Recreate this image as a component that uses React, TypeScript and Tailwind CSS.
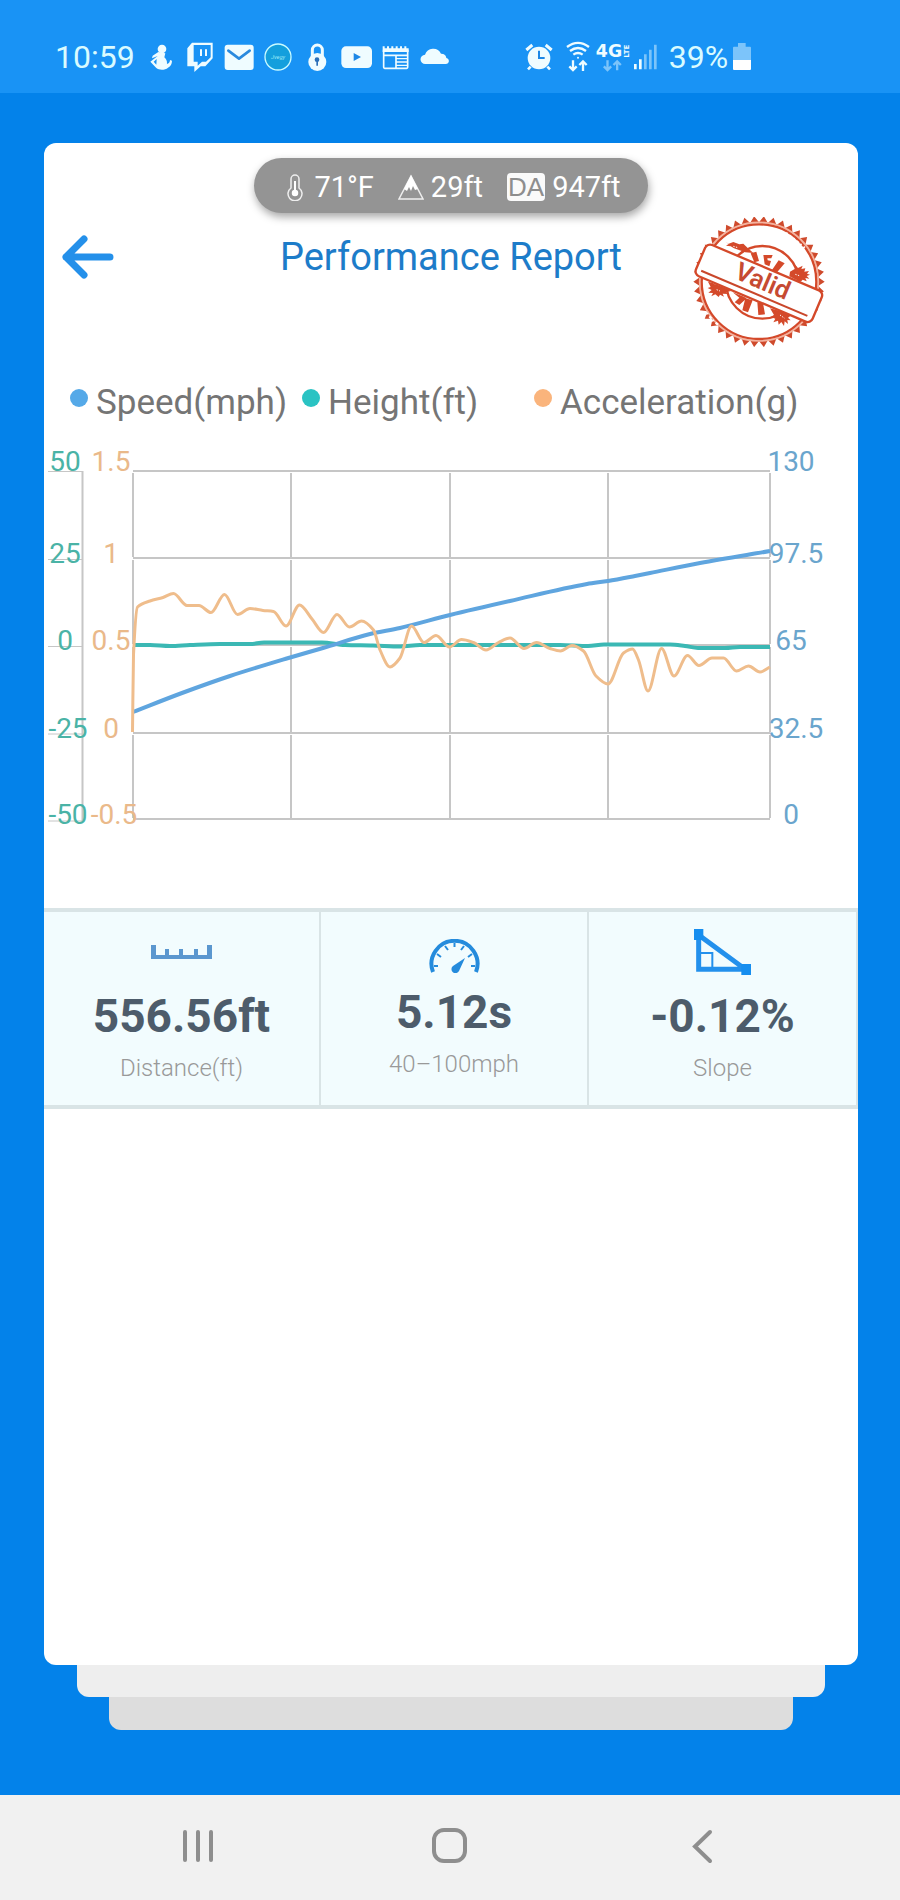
import React from 'react';

type Point = [number, number];

const LEGEND = [
  { label: 'Speed(mph)', dot: 'bg-[#55a9e8]' },
  { label: 'Height(ft)', dot: 'bg-[#2ac3c3]' },
  { label: 'Acceleration(g)', dot: 'bg-[#fab47c]' },
];

const GRID_X = [133, 291, 450, 608, 770];
const GRID_Y = [471, 558, 645, 733, 819];

const HEIGHT_LABELS = ['50', '25', '0', '-25', '-50'];
const ACCEL_LABELS = ['1.5', '1', '0.5', '0', '-0.5'];
const SPEED_LABELS = ['130', '97.5', '65', '32.5', '0'];
const LABEL_Y = [471, 563, 650, 738, 824];

const SPEED: Point[] = [
  [133, 712], [182, 693], [230, 676], [285, 659], [323, 648], [370, 634], [400, 628], [450, 615],
  [510, 601], [587, 584], [608, 581], [635, 576], [650, 573], [700, 563], [770, 551],
];

const HEIGHT: Point[] = [
  [133, 645], [150, 645], [170, 646], [190, 645], [220, 644], [250, 644], [264, 642.5], [322, 642.5],
  [345, 645], [373, 645.5], [400, 646.5], [420, 645], [480, 645], [560, 645], [588, 646], [604, 644.5],
  [670, 644.5], [685, 646], [698, 648], [725, 648], [740, 647], [770, 647],
];

const ACCEL: Point[] = [
  [132.5, 732], [133.5, 655], [137.5, 607], [150, 601], [163, 597.5], [173.5, 593.5], [187, 605.5],
  [199, 605.5], [211, 612.5], [224.5, 594.5], [237.5, 614.5], [250, 608.5], [263, 610.5], [273.5, 611.5],
  [286, 626], [299.5, 605], [312, 619], [323.5, 632.5], [337, 614.5], [349.5, 627], [361.5, 621],
  [373.5, 630], [380, 650], [390, 667], [400, 658], [411.5, 626], [424, 642.5], [436, 635.5],
  [449.5, 647], [461.5, 639.5], [473.5, 642.5], [486, 650], [498.5, 642.5], [510, 638], [524, 648.5],
  [536.5, 642.5], [550, 648.5], [560.5, 651], [572, 645.5], [583.5, 651], [596, 676], [608, 684],
  [623.5, 653], [632.5, 649], [638.5, 660], [648, 691], [661.5, 648.5], [674, 676], [687.5, 655.5],
  [699, 665.5], [712, 658], [723.5, 658], [736.5, 671], [748.5, 666], [760, 672], [770, 667],
];

// Monotone cubic: flat at every peak and dip, so the curve never overshoots.
const smooth = (pts: Point[]) => {
  const slope = (i: number) => (pts[i + 1][1] - pts[i][1]) / (pts[i + 1][0] - pts[i][0]);
  const tangents = pts.map((_, i) => {
    if (i === 0) return slope(0);
    if (i === pts.length - 1) return slope(i - 1);
    const a = slope(i - 1);
    const b = slope(i);
    return a * b <= 0 ? 0 : (2 * a * b) / (a + b);
  });
  let d = `M${pts[0][0]} ${pts[0][1]}`;
  for (let i = 0; i < pts.length - 1; i++) {
    const [x0, y0] = pts[i];
    const [x1, y1] = pts[i + 1];
    const h = (x1 - x0) / 3;
    d += `C${x0 + h} ${y0 + tangents[i] * h} ${x1 - h} ${y1 - tangents[i + 1] * h} ${x1} ${y1}`;
  }
  return d;
};

// Zigzag rim of the stamp.
const rim = (cx: number, cy: number, inner: number, outer: number, teeth: number) =>
  Array.from({ length: teeth * 2 }, (_, i) => {
    const r = i % 2 ? inner : outer;
    const a = (i * Math.PI) / teeth;
    return `${(cx + r * Math.cos(a)).toFixed(1)},${(cy + r * Math.sin(a)).toFixed(1)}`;
  }).join(' ');

const NoticeIcon: React.FC<{ children: React.ReactNode }> = ({ children }) => (
  <svg viewBox="0 0 117 96" className="h-8 w-[39px] shrink-0" fill="#effcff" aria-hidden="true">
    {children}
  </svg>
);

const StatusBar: React.FC = () => (
  <header className="flex h-[93px] items-center whitespace-nowrap bg-[#1993f5] pl-[55px] pt-5 text-[32px] leading-8 text-[#d9fbff]">
    <span>10:59</span>
    <div className="ml-[6px] flex">
      <NoticeIcon>
        <circle cx="63" cy="24" r="13" />
        <path d="M52 33L35 44l-2 8 17-7-22 17 18 19c8 7 26 7 35-1 8-4 12-12 12-21l-6-2c0 7-4 11-9 12 1-9-3-15-8-20l3-12z" />
        <path d="M47 54l-9 8 8 9z" fill="#1993f5" />
      </NoticeIcon>
      <NoticeIcon>
        <path
          fillRule="evenodd"
          d="M22 22L36 5h62v47L76 76H62L43 93V76H22zM41 12v50h12v12l13-12h12l14-13V12z"
        />
        <path d="M60 25h6v20h-6zM75 25h6v20h-6z" />
      </NoticeIcon>
      <NoticeIcon>
        <rect x="17" y="11" width="87" height="76" rx="9" />
        <path d="M28 29l32 24 32-24" fill="none" stroke="#2a8ade" strokeWidth="8" strokeLinecap="round" strokeLinejoin="round" />
      </NoticeIcon>
      <NoticeIcon>
        <circle cx="60" cy="48" r="39" fill="#149fdd" stroke="#c9fbff" strokeWidth="4" />
        <text x="60" y="54" textAnchor="middle" fontSize="17" fontStyle="italic" fill="#9be8f5">Jvegy</text>
      </NoticeIcon>
      <NoticeIcon>
        <path d="M46 48V27a15 15 0 0 1 30 0v21" fill="none" stroke="#effcff" strokeWidth="9" />
        <circle cx="61" cy="63" r="27" />
        <circle cx="60" cy="56" r="7" fill="#2a6fb8" />
        <path d="M58 60h5v14h-5z" fill="#2a6fb8" />
      </NoticeIcon>
      <NoticeIcon>
        <rect x="16" y="16" width="92" height="65" rx="14" />
        <path d="M53 36l22 12-22 12z" fill="#1c87e6" />
      </NoticeIcon>
      <NoticeIcon>
        <path d="M23 16h6v6h7v-6h6v6h7v-6h6v6h7v-6h6v6h7v-6h6v6h7v-6h6v6h7v11H23z" />
        <path d="M26 26v53a3 3 0 0 0 3 3h66a3 3 0 0 0 3-3V26M26 43h72M63 43v39" fill="none" stroke="#effcff" strokeWidth="5" />
        <path d="M63 53h34M63 63h34M63 73h34" stroke="#effcff" strokeWidth="4" />
      </NoticeIcon>
      <NoticeIcon>
        <path d="M34 69a14 14 0 0 1-1-28 26 26 0 0 1 48-3c13-1 16 10 16 13 11 3 10 18-2 18z" />
      </NoticeIcon>
    </div>
    <svg viewBox="258 123 84 96" className="ml-[72px] h-8 w-7 shrink-0" fill="#effcff" aria-hidden="true">
      <circle cx="300" cy="174" r="34" />
      <path d="M262 150l18-15M338 150l-18-15" stroke="#effcff" strokeWidth="9" />
      <path d="M275 200l-8 8M325 200l8 8" stroke="#effcff" strokeWidth="8" />
      <path d="M300 152v22h17" fill="none" stroke="#1c87e6" strokeWidth="6" />
    </svg>
    <svg viewBox="381 123 72 96" className="ml-[13px] h-8 w-6 shrink-0" fill="none" stroke="#effcff" strokeWidth="7" aria-hidden="true">
      <path d="M384 141q33-25 66 0M393 153q24-18 48 0M403 164q14-10 28 0" />
      <circle cx="417" cy="173" r="3" fill="#effcff" stroke="none" />
      <path d="M402 181v28M391 199l11 11 11-11M432 213v-28M421 195l11-11 11 11" />
    </svg>
    <svg viewBox="467 123 104 96" className="ml-[5px] h-8 w-[35px] shrink-0" fill="#effcff" aria-hidden="true">
      <text x="469" y="171" fontFamily="DejaVu Sans" fontWeight="700" fontSize="52">4G</text>
      <text x="568" y="173" fontFamily="DejaVu Sans" fontWeight="700" fontSize="21" transform="rotate(-90 568 173)">LTE</text>
      <path d="M504 181v28M493 199l11 11 11-11M533 211v-27M522 195l11-11 11 11" fill="none" stroke="#7cc4fa" strokeWidth="7" />
    </svg>
    <svg viewBox="585 123 72 96" className="ml-1 h-8 w-6 shrink-0" fill="#7cc4fa" aria-hidden="true">
      <path d="M585 192h8v16h-8zM600 178h8v30h-8z" fill="#effcff" />
      <path d="M615 163h8v45h-8zM630 149h8v59h-8zM645 134h8v74h-8z" />
    </svg>
    <span className="ml-[11px]">39%</span>
    <svg viewBox="882 123 54 96" className="ml-[5px] h-8 w-[18px] shrink-0" fill="#7cc4fa" aria-hidden="true">
      <path d="M897 129h23v11h13a3 3 0 0 1 3 3v38h-54v-38a3 3 0 0 1 3-3h12z" />
      <path d="M882 180h54v27a3 3 0 0 1-3 3h-48a3 3 0 0 1-3-3z" fill="#fff" />
    </svg>
  </header>
);

const WeatherPill: React.FC = () => (
  <div className="mx-auto flex h-[55px] w-fit items-center whitespace-nowrap rounded-full bg-[#949494] pl-8 pr-[27px] pt-[2px] text-[29px] leading-8 text-white shadow-[1px_4px_8px_rgba(0,0,0,0.35)]">
    <svg viewBox="0 0 18 28" className="h-7 w-[18px]" fill="none" stroke="#eee" strokeWidth="1.5" aria-hidden="true">
      <path d="M5 15V6a4 4 0 0 1 8 0v9a7 7 0 1 1-8 0z" />
      <path d="M9 8v12" strokeWidth="2" stroke="#fff" />
      <circle cx="9" cy="20" r="2.5" fill="#fff" stroke="#fff" />
    </svg>
    <span className="ml-[10px]">71°F</span>
    <svg viewBox="0 0 26 28" className="ml-6 h-7 w-[26px]" aria-hidden="true">
      <path d="M13 3L1 26h24z" fill="none" stroke="#eee" strokeWidth="1.5" />
      <path d="M13 2L6 16l3 2 2-4 2 4 2-5 2 4 3-1z" fill="#fff" />
    </svg>
    <span className="ml-[7px]">29ft</span>
    <span className="ml-6 rounded-[4px] bg-[#fafafa] px-px font-['Liberation_Sans'] text-[26px] leading-7 text-[#8e8e8e]">DA</span>
    <span className="ml-[7px]">947ft</span>
  </div>
);

const ValidStamp: React.FC = () => (
  <svg viewBox="39 34 399 390" className="mr-[14px] h-[130px] w-[133px] justify-self-end" role="img" aria-label="Valid stamp">
    <polygon points={rim(237, 228, 178, 197, 42)} fill="#cf4a2c" />
    <circle cx="237" cy="228" r="178" fill="#fff" stroke="#f5b39e" strokeWidth="5" />
    <circle cx="237" cy="228" r="172" fill="none" stroke="#d4492a" strokeWidth="7" />
    <path d="M318 82l26 20 30 25M80 322l20 24 18 14" stroke="#fff" strokeWidth="7" strokeDasharray="5 8 9 5" fill="none" />
    <circle cx="247" cy="230" r="109" fill="none" stroke="#d4492a" strokeWidth="7" />
    <g fill="#d4492a">
      <path d="M212 143l17-5 8 28-14 4zM250 148h28l-4 10h-12l1 6 10 2-5 16-14-6zM296 164l18 9-24 28-14-8z" />
      <path d="M158 260l30 12 12 6-22 20-14-8 14-14zM196 278l22 6-14 36-17-6zM232 290l17 2 6 34-20 2zM262 296l16 4-4 6z" />
      <path d="M136 108l10 6 14-5 18 7 12-2 14 14 16 14-24-2-34-12-10-6-14-2 8-5z" />
      <path d="M330 198l14-8 2-12 8 9 14-7-4 10 12-2-3 10 14-2-6 8 9 3-10 4 8 8-12-2 4 10-12-5-6 6-18-8-16-8z" />
      <path d="M84 228l14 4 30 12 26 12-16 3 8 6-18-1 4 9-12-6-4 7-10-8-12 6 5-10-14-1 10-8-12-6 9-3z" />
      <path d="M270 308l30 8 32 14-8 6 8 8-10-1 2 12-10-8-2 14-8-12-8 8-2-12-14 5 6-11-14-5 10-6z" />
    </g>
    <path d="M94 228l14 9M110 252l10 4M346 206l12 4M300 328l14 10M160 122l14 4" stroke="#fff" strokeWidth="3" strokeDasharray="4 4" />
    <g transform="translate(237 232) rotate(23)">
      <rect x="-190" y="-50" width="380" height="102" rx="16" fill="#fff" stroke="#d4492a" strokeWidth="7" />
      <path d="M-174 34H172" stroke="#c9472b" strokeWidth="6" />
      <text x="8" y="16" textAnchor="middle" fontSize="76" fontWeight="600" fill="#c64a32">Valid</text>
    </g>
  </svg>
);

const Chart: React.FC = () => (
  <svg viewBox="44 440 814 400" className="mt-[17px] block w-full" role="img" aria-label="Speed, height and acceleration">
    <g stroke="#c6c6c6" strokeWidth="2" fill="none">
      {GRID_Y.map(y => (
        <path key={y} d={`M133 ${y}H770`} />
      ))}
      {GRID_X.map(x =>
        GRID_Y.slice(1).map((y, i) => <path key={`${x}-${y}`} d={`M${x} ${GRID_Y[i] + 2}V${y - 1}`} />),
      )}
      <path d="M82.5 471V821" />
      {[471.5, 559.5, 646.5, 734, 821].map(y => (
        <path key={y} d={`M48 ${y}H83`} strokeWidth="1" />
      ))}
    </g>
    <path d={smooth(HEIGHT)} fill="none" stroke="#3bb8b4" strokeWidth="4" />
    <path d={smooth(SPEED)} fill="none" stroke="#5fa5df" strokeWidth="4" />
    <path d={smooth(ACCEL)} fill="none" stroke="#efbd8c" strokeWidth="3" />
    <g fontSize="28" textAnchor="middle">
      {LABEL_Y.map((y, i) => (
        <React.Fragment key={y}>
          <text x={HEIGHT_LABELS[i].startsWith('-') ? 68 : 65} y={y} fill="#4ab3a6">{HEIGHT_LABELS[i]}</text>
          <text x={ACCEL_LABELS[i].startsWith('-') ? 114 : 111} y={y} fill="#eab98a">{ACCEL_LABELS[i]}</text>
          <text x={SPEED_LABELS[i].includes('.') ? 796 : 791} y={y} fill="#6aa5cd">{SPEED_LABELS[i]}</text>
        </React.Fragment>
      ))}
    </g>
  </svg>
);

const RulerIcon = () => (
  <svg viewBox="0 0 61 14" className="h-[14px] w-[61px]" fill="#5b97cf" aria-hidden="true">
    <path d="M0 0h5v10h9V4h4v6h10V4h4v6h11V4h4v6h9V0h5v14H0z" />
  </svg>
);

const GaugeIcon = () => (
  <svg viewBox="0 0 51 34" className="h-[34px] w-[51px]" fill="none" stroke="#258bdc" aria-hidden="true">
    <path d="M4 33A23 23 0 1 1 47 33" strokeWidth="4" />
    <path d="M5 27h4M8 15l4 3M16 7l3 4M25.5 4v4M35 7l-3 4M43 15l-4 3M46 27h-4" strokeWidth="2" />
    <path d="M36 19L24 27a4 4 0 1 0 6 5z" fill="#258bdc" stroke="none" />
  </svg>
);

const SlopeIcon = () => (
  <svg viewBox="762 117 171 138" className="h-[46px] w-[57px]" fill="none" stroke="#2390ec" aria-hidden="true">
    <path d="M776 135v103h140z" strokeWidth="15" />
    <path d="M783 189h34v44" strokeWidth="6" />
    <path d="M762 117h28v33h-28zM904 222h29v33h-29z" fill="#168eef" stroke="none" />
  </svg>
);

const STATS = [
  { icon: <RulerIcon />, iconBox: 'h-[66px] items-center pt-[14px]', value: '556.56ft', label: 'Distance(ft)' },
  { icon: <GaugeIcon />, iconBox: 'h-[62px] items-end pb-px', value: '5.12s', label: '40–100mph' },
  { icon: <SlopeIcon />, iconBox: 'h-[66px] items-center pt-[14px]', value: '-0.12%', label: 'Slope' },
];

const App: React.FC = () => (
  <div className="flex min-h-screen flex-col bg-[#0382ea] font-[Roboto,sans-serif]">
    <StatusBar />

    <main className="flex flex-1 flex-col pb-[65px] pl-11 pr-[42px] pt-[50px]">
      <article className="flex-1 rounded-xl bg-white pb-10 pt-[15px]">
        <WeatherPill />

        <div className="mt-1 grid grid-cols-[1fr_auto_1fr] items-start px-[18px]">
          <button type="button" aria-label="Back" className="mt-[18px] h-11 w-[52px]">
            <svg viewBox="0 0 52 44" className="h-11 w-[52px]" fill="none" stroke="#2490ea" strokeWidth="7" strokeLinecap="round" strokeLinejoin="round">
              <path d="M22 4L4 22l18 18M4 22h44" />
            </svg>
          </button>
          <h1 className="mt-5 text-[38px] leading-10 text-[#1d7cc9]">Performance Report</h1>
          <ValidStamp />
        </div>

        <ul className="mt-9 grid grid-cols-3 pl-[26px] pr-[92px]">
          {LEGEND.map(item => (
            <li key={item.label} className="flex items-start gap-2 whitespace-nowrap text-[35px] leading-10 text-[#757575]">
              <span className={`mt-[6px] h-[18px] w-[18px] shrink-0 rounded-full ${item.dot}`} />
              {item.label}
            </li>
          ))}
        </ul>

        <Chart />

        <section className="mt-[68px] grid grid-cols-[277fr_268fr_269fr] border-y-4 border-[#d9e4e6] bg-[#f2fcfe]">
          {STATS.map(stat => (
            <div key={stat.label} className="flex h-[193px] flex-col items-center border-r-2 border-[#d9e4e6]">
              <div className={`flex justify-center ${stat.iconBox}`}>{stat.icon}</div>
              <p className="mt-2 text-[46px] font-bold leading-[60px] text-[#4d5c6b]">{stat.value}</p>
              <p className="mt-[6px] text-[24px] font-light leading-8 text-[#999]">{stat.label}</p>
            </div>
          ))}
        </section>
      </article>
      <div className="mx-[33px] h-8 rounded-b-xl bg-[#eee]" />
      <div className="mx-[65px] h-[33px] rounded-b-xl bg-[#ddd]" />
    </main>

    <nav className="grid h-[105px] grid-cols-3 place-items-center bg-[#f1f1f1] px-[72px] pb-1" aria-label="System">
      <button type="button" aria-label="Recent apps">
        <svg viewBox="0 0 36 36" className="h-9 w-9" stroke="#8e8e8e" strokeWidth="4" strokeLinecap="round">
          <path d="M5 4v28M18 4v28M31 4v28" />
        </svg>
      </button>
      <button type="button" aria-label="Home">
        <svg viewBox="0 0 36 36" className="h-9 w-9" fill="none" stroke="#8e8e8e" strokeWidth="4">
          <rect x="2" y="2" width="31" height="31" rx="10" />
        </svg>
      </button>
      <button type="button" aria-label="Back">
        <svg viewBox="0 0 36 36" className="h-9 w-9" fill="none" stroke="#8e8e8e" strokeWidth="4" strokeLinecap="round">
          <path d="M26 4L11 18.5 26 33" />
        </svg>
      </button>
    </nav>
  </div>
);

export default App;
